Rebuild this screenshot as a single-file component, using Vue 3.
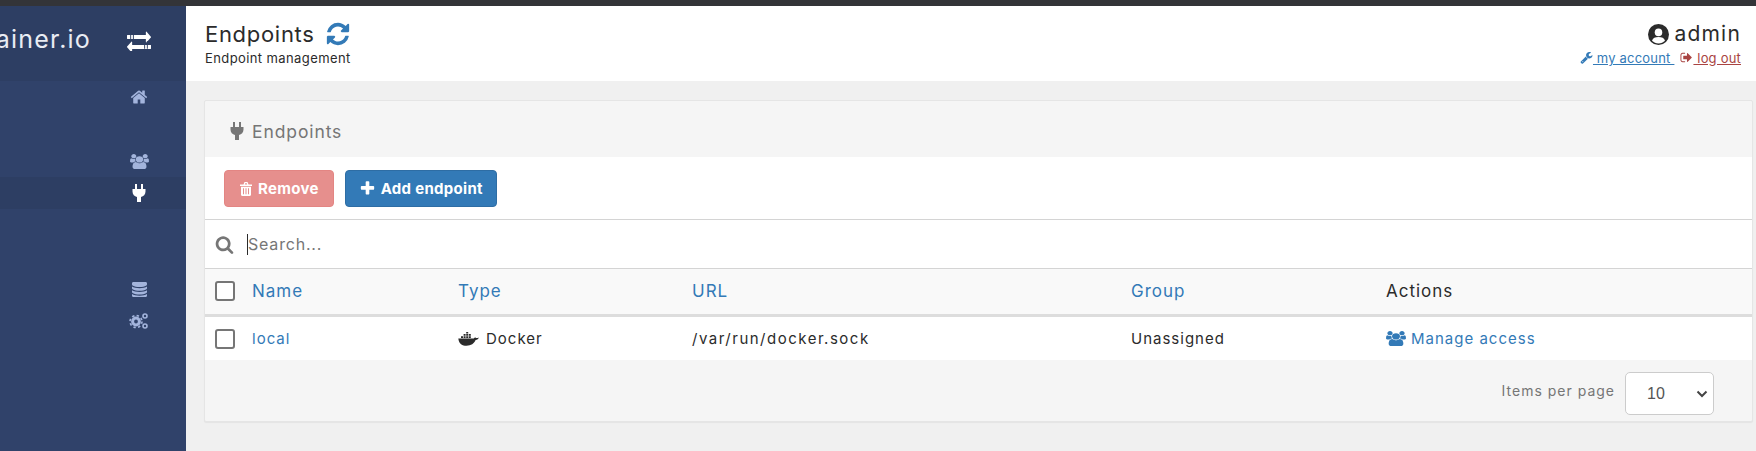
<script setup>
const paths = {
  exchange: 'M1792 1184v192q0 13-9.5 22.5t-22.5 9.5h-1376v192q0 13-9.5 22.5t-22.5 9.5q-12 0-24-10l-319-320q-9-9-9-22 0-14 9-23l320-320q9-9 23-9 13 0 22.5 9.5t9.5 22.5v192h1376q13 0 22.5 9.5t9.5 22.5zm0-544q0 14-9 23l-320 320q-9 9-23 9-13 0-22.5-9.5t-9.5-22.5v-192h-1376q-13 0-22.5-9.5t-9.5-22.5v-192q0-13 9.5-22.5t22.5-9.5h1376v-192q0-14 9-23t23-9q12 0 24 10l319 319q9 9 9 23z',
  home: 'M1472 992v480q0 26-19 45t-45 19h-384v-384h-256v384h-384q-26 0-45-19t-19-45v-480q0-1 .5-3t.5-3l575-474 575 474q1 2 1 6zm223-69l-62 74q-8 9-21 11h-3q-13 0-21-7l-692-577-692 577q-12 8-24 7-13-2-21-11l-62-74q-8-10-7-23.5t11-21.5l719-599q32-26 76-26t76 26l244 204v-195q0-14 9-23t23-9h192q14 0 23 9t9 23v408l219 182q10 8 11 21.5t-7 23.5z',
  users: 'M593 896q-162 5-265 128h-134q-82 0-138-40.5t-56-118.5q0-353 124-353 6 0 43.5 21t97.5 42.5 119 21.5q67 0 133-23-5 37-5 66 0 139 81 256zm1071 637q0 120-73 189.5t-194 69.5h-874q-121 0-194-69.5t-73-189.5q0-53 3.5-103.5t14-109 26.5-108.5 43-97.5 62-81 85.5-53.5 111.5-20q10 0 43 21.5t73 48 107 48 135 21.5 135-21.5 107-48 73-48 43-21.5q61 0 111.5 20t85.5 53.5 62 81 43 97.5 26.5 108.5 14 109 3.5 103.5zm-1024-1277q0 106-75 181t-181 75-181-75-75-181 75-181 181-75 181 75 75 181zm704 384q0 159-112.5 271.5t-271.5 112.5-271.5-112.5-112.5-271.5 112.5-271.5 271.5-112.5 271.5 112.5 112.5 271.5zm576 225q0 78-56 118.5t-138 40.5h-134q-103-123-265-128 81-117 81-256 0-29-5-66 66 23 133 23 59 0 119-21.5t97.5-42.5 43.5-21q124 0 124 353zm-128-609q0 106-75 181t-181 75-181-75-75-181 75-181 181-75 181 75 75 181z',
  plug: 'M3 0h2v5H3zM9 0h2v5H9zM.5 5h13v2.500c0 3-2 5-4.500 5.500V18H5v-5C2.500 12.500.5 10.500.5 7.500z',
  database: 'M896 768q237 0 443-43t325-127v170q0 69-103 128t-280 93.5-385 34.5-385-34.5-280-93.5-103-128v-170q119 84 325 127t443 43zm0 768q237 0 443-43t325-127v170q0 69-103 128t-280 93.5-385 34.5-385-34.5-280-93.5-103-128v-170q119 84 325 127t443 43zm0-384q237 0 443-43t325-127v170q0 69-103 128t-280 93.5-385 34.5-385-34.5-280-93.5-103-128v-170q119 84 325 127t443 43zm0-1152q208 0 385 34.5t280 93.5 103 128v128q0 69-103 128t-280 93.5-385 34.5-385-34.5-280-93.5-103-128v-128q0-69 103-128t280-93.5 385-34.5z',
  refresh: 'M1639 1056q0 5-1 7-64 268-268 434.5t-478 166.5q-146 0-282.5-55t-243.5-157l-129 129q-19 19-45 19t-45-19-19-45v-448q0-26 19-45t45-19h448q26 0 45 19t19 45-19 45l-137 137q71 66 161 102t187 36q134 0 250-65t186-179q11-17 53-117 8-23 30-23h192q13 0 22.5 9.5t9.5 22.5zm25-800v448q0 26-19 45t-45 19h-448q-26 0-45-19t-19-45 19-45l138-138q-148-137-349-137-134 0-250 65t-186 179q-11 17-53 117-8 23-30 23h-199q-13 0-22.5-9.5t-9.5-22.5v-7q65-268 270-434.5t480-166.5q146 0 284 55.5t245 156.5l130-129q19-19 45-19t45 19 19 45z',
  trash: 'M1 3.500h12v1.500H1zM4.500 3.500 5.500 1h3l1 2.500h-1.300L7.800 2.300H6.200l-.4 1.200zM2 5.800h10v8c0 .7-.5 1.200-1.200 1.200H3.200C2.500 15 2 14.500 2 13.800zM4 7.300v6h1v-6zM6.500 7.300v6h1v-6zM9 7.300v6h1v-6z',
  plus: 'M1600 736v192q0 40-28 68t-68 28h-416v416q0 40-28 68t-68 28h-192q-40 0-68-28t-28-68v-416h-416q-40 0-68-28t-28-68v-192q0-40 28-68t68-28h416v-416q0-40 28-68t68-28h192q40 0 68 28t28 68v416h416q40 0 68 28t28 68z',
  search: 'M1216 832q0-185-131.5-316.5t-316.5-131.5-316.5 131.5-131.5 316.5 131.5 316.5 316.5 131.5 316.5-131.5 131.5-316.5zm512 832q0 52-38 90t-90 38q-54 0-90-38l-343-342q-179 124-399 124-143 0-273.5-55.5t-225-150-150-225-55.5-273.5 55.5-273.5 150-225 225-150 273.5-55.5 273.5 55.5 225 150 150 225 55.5 273.5q0 220-124 399l343 343q37 37 37 90z',
  wrench: 'M448 1472q0-26-19-45t-45-19-45 19-19 45 19 45 45 19 45-19 19-45zm644-420l-682 682q-37 37-90 37-52 0-91-37l-106-108q-38-36-38-90 0-53 38-91l681-681q39 98 114.5 173.5t173.5 114.5zm634-435q0 39-23 106-47 134-164.5 217.5t-258.5 83.5q-185 0-316.5-131.5t-131.5-316.5 131.5-316.5 316.5-131.5q58 0 121.5 16.5t107.5 46.5q16 11 16 28t-16 28l-293 169v224l193 107q5-3 79-48.5t135.5-81 70.5-35.5q15 0 23.5 10t8.5 25z',
  signout: 'M704 1440q0 4 1 20t.5 26.5-3 23.5-10 19.5-20.5 6.5h-320q-119 0-203.5-84.5t-84.5-203.5v-704q0-119 84.5-203.5t203.5-84.5h320q13 0 22.5 9.5t9.5 22.5q0 4 1 20t.5 26.5-3 23.5-10 19.5-20.5 6.5h-320q-66 0-113 47t-47 113v704q0 66 47 113t113 47h312l11.5 1 11.5 3 8 5.5 7 9 2 13.5zm928-544q0 26-19 45l-544 544q-19 19-45 19t-45-19-19-45v-288h-448q-26 0-45-19t-19-45v-384q0-26 19-45t45-19h448v-288q0-26 19-45t45-19 45 19l544 544q19 19 19 45z',
}
const cols = ['Type', 'URL', 'Group']
</script>

<template>
  <div class="page">
    <div class="topbar"></div>
    <div class="shell">
      <aside class="sidebar">
        <div class="brand">
          <span class="brand-text">portainer.io</span>
          <svg class="i brand-icon" viewBox="0 250 1792 1292" preserveAspectRatio="none">
            <path fill="#fff" :d="paths.exchange" />
            <path fill="#2d3e63" d="M240 400h70v500h-70zM440 400h70v500h-70zM1282 900h70v500h-70zM1482 900h70v500h-70z" />
          </svg>
        </div>
        <nav class="nav">
          <div class="nav-row"><svg class="i s18" viewBox="0 0 1792 1792"><path :d="paths.home" /></svg></div>
          <div class="nav-row"></div>
          <div class="nav-row"><svg class="i users" viewBox="0 0 1920 1792" preserveAspectRatio="none"><path :d="paths.users" /></svg></div>
          <div class="nav-row active"><svg class="i nav-plug" viewBox="0 0 14 18"><path :d="paths.plug" /></svg></div>
          <div class="nav-row"></div>
          <div class="nav-row"></div>
          <div class="nav-row"><svg class="i s16" viewBox="128 128 1536 1536" preserveAspectRatio="none"><path :d="paths.database" /></svg></div>
          <div class="nav-row">
            <svg class="i s20" viewBox="0 0 20 20">
              <circle cx="7" cy="10.500" r="3.400" fill="none" stroke="#a3b4dc" stroke-width="3" />
              <circle cx="7" cy="10.500" r="6" fill="none" stroke="#a3b4dc" stroke-width="1.600" stroke-dasharray="2.400 2.300" />
              <circle cx="16" cy="5" r="2" fill="none" stroke="#a3b4dc" stroke-width="1.600" />
              <circle cx="16" cy="15" r="2" fill="none" stroke="#a3b4dc" stroke-width="1.600" />
            </svg>
          </div>
        </nav>
      </aside>
      <main class="main">
        <header class="header">
          <div class="title-col">
            <div class="title">Endpoints <svg class="i refresh" viewBox="0 0 1792 1792"><path fill="#337ab7" :d="paths.refresh" /></svg></div>
            <div class="subtitle">Endpoint management</div>
          </div>
          <div class="user-col">
            <div class="user">
              <svg class="i user-icon" viewBox="0 0 20 20">
                <circle cx="10" cy="10" r="10" fill="#2b2b2b" />
                <circle cx="10" cy="8" r="3.600" fill="#fff" />
                <path fill="#fff" d="M3.800 16c.8-2.600 3-3.600 6.200-3.600s5.400 1 6.200 3.600c-1.600 1.600-3.800 2.500-6.200 2.500S5.400 17.600 3.800 16z" />
              </svg>
              <span>admin</span>
            </div>
            <div class="user-links">
              <a class="ulink blue"><svg class="i s13" viewBox="0 0 1792 1792"><path fill="currentColor" :d="paths.wrench" /></svg> my account&nbsp;</a>
              <a class="ulink red"><svg class="i s13" viewBox="0 0 1792 1792"><path fill="currentColor" :d="paths.signout" /></svg> log out</a>
            </div>
          </div>
        </header>
        <section class="content">
          <div class="card">
            <div class="card-head">
              <svg class="i head-plug" viewBox="0 0 14 18"><path fill="#767676" :d="paths.plug" /></svg>
              <span>Endpoints</span>
            </div>
            <div class="toolbar">
              <button class="btn danger"><svg class="i trash-icon" viewBox="0 0 14 16"><path fill="#fff" fill-rule="evenodd" :d="paths.trash" /></svg>Remove</button>
              <button class="btn primary"><svg class="i s17" viewBox="0 0 1792 1792"><path fill="#fff" :d="paths.plus" /></svg>Add endpoint</button>
            </div>
            <div class="searchbar">
              <svg class="i search-icon" viewBox="0 0 1792 1792"><path fill="#767676" :d="paths.search" /></svg>
              <span class="caret"></span>
              <span class="placeholder">Search...</span>
            </div>
            <div class="grid-row thead">
              <div class="check-cell"><span class="box"></span></div>
              <div class="hlink">Name</div>
              <div v-for="c in cols" :key="c" class="hlink">{{ c }}</div>
              <div>Actions</div>
            </div>
            <div class="grid-row tbody">
              <div class="check-cell"><span class="box"></span></div>
              <div class="link">local</div>
              <div class="docker">
                <svg class="whale" viewBox="0 0 21 14">
                  <path fill="#2b2b2b" d="M.3 6.500h15.400c.6-.7 1.100-1.200 1.600-1.300.3.700.9 1 2.200.8l1.300-.4c-.3 1.400-1.500 2.300-3.200 2.500C16.300 11.600 13 13.800 8.500 13.800c-4 0-7.700-1.900-8.200-7.300z" />
                  <path fill="#2b2b2b" d="M3 4.300h2v1.700H3zM5.600 4.300h2v1.700h-2zM8.200 4.300h2v1.700h-2zM10.800 4.300h2v1.700h-2zM5.600 2h2v1.700h-2zM8.200 2h2v1.700h-2zM10.800 2h2v1.700h-2zM8.200 0h2v1.500h-2z" />
                </svg>
                <span>Docker</span>
              </div>
              <div class="url">/var/run/docker.sock</div>
              <div>Unassigned</div>
              <div class="link manage-cell"><svg class="i manage" viewBox="0 0 1920 1792" preserveAspectRatio="none"><path fill="#337ab7" :d="paths.users" /></svg> Manage access</div>
            </div>
            <div class="card-foot">
              <span class="per-page">Items per page</span>
              <div class="select">
                <span>10</span>
                <svg class="chev" viewBox="0 0 12 8"><path d="M1.500 1.500 6 6l4.500-4.500" fill="none" stroke="#444" stroke-width="2" /></svg>
              </div>
            </div>
          </div>
        </section>
      </main>
    </div>
  </div>
</template>

<style>
html, body { margin: 0; padding: 0; background: #f0f0f0; overflow: hidden; }
</style>

<style scoped>
.page {
  width: 1756px;
  height: 451px;
  overflow: hidden;
  display: flex;
  flex-direction: column;
  font-family: Inter, "Open Sans", sans-serif;
  color: #2b2b2b;
  background: #f0f0f0;
}
.topbar { height: 6px; background: #333438; flex: none; }
.shell { flex: 1; display: flex; min-height: 0; }
.i { display: inline-block; flex: none; }
.sidebar { width: 186px; flex: none; background: #30426a; display: flex; flex-direction: column; }
.brand {
  height: 75px;
  background: #2d3e63;
  display: flex;
  align-items: center;
  justify-content: flex-end;
  overflow: hidden;
  padding-right: 35px;
  gap: 36px;
}
.brand-text { color: #e9ecf3; font-size: 25px; letter-spacing: 1.200px; white-space: nowrap; margin-top: -9px; }
.brand-icon { width: 24px; height: 20px; margin-top: -6px; }
.nav { display: flex; flex-direction: column; }
.nav-row {
  height: 32px;
  display: grid;
  grid-template-columns: 20px;
  justify-content: end;
  justify-items: center;
  align-items: center;
  padding-right: 37px;
  fill: #a3b4dc;
}
.s16 { width: 15px; height: 15px; }
.s18 { width: 18px; height: 18px; }
.s20 { width: 20px; height: 20px; }
.s13 { width: 13px; height: 13px; vertical-align: -1px; }
.s17 { width: 17px; height: 17px; }
.trash-icon { width: 14px; height: 16px; }
.users { width: 19px; height: 15px; }
.nav-plug { width: 14px; height: 18px; }
.nav-row.active { background: #2d3e63; fill: #fff; }
.main { flex: 1; min-width: 0; display: flex; flex-direction: column; }
.header {
  height: 75px;
  flex: none;
  background: #fff;
  display: flex;
  justify-content: space-between;
  padding: 15px 15px 0 19px;
  box-sizing: border-box;
}
.title { font-size: 22px; line-height: 26px; color: #2b2b2b; letter-spacing: 0.700px; display: flex; align-items: center; gap: 6px; }
.refresh { width: 26px; height: 26px; margin-left: 4px; }
.subtitle { font-size: 13px; line-height: 18px; margin-top: 2px; color: #2b2b2b; letter-spacing: 0.400px; }
.user-col { display: flex; flex-direction: column; align-items: flex-end; }
.user { font-size: 21px; line-height: 26px; letter-spacing: 1.200px; display: flex; align-items: center; gap: 5px; }
.user-icon { width: 21px; height: 21px; }
.user-links { font-size: 13px; line-height: 18px; margin-top: 2px; display: flex; gap: 6px; letter-spacing: 0.200px; }
.ulink { text-decoration: underline; white-space: nowrap; }
.blue { color: #337ab7; }
.red { color: #a94442; }
.content { padding: 19px 3px 0 18px; }
.card {
  background: #f5f5f5;
  border: 1px solid #e5e5e5;
  border-radius: 2px;
  box-shadow: 0 1px 1px rgba(0, 0, 0, 0.05);
  height: 322px;
  box-sizing: border-box;
  overflow: hidden;
}
.card-head {
  height: 56px;
  display: flex;
  align-items: center;
  padding: 4px 0 0 25px;
  box-sizing: border-box;
  gap: 8px;
  font-size: 17.500px;
  letter-spacing: 0.900px;
  color: #767676;
}
.head-plug { width: 14px; height: 18px; }
.toolbar {
  height: 63px;
  background: #fff;
  box-sizing: border-box;
  border-bottom: 1px solid #d4d4d4;
  display: flex;
  align-items: flex-start;
  padding: 13px 0 0 19px;
  gap: 11px;
}
.btn {
  height: 37px;
  box-sizing: border-box;
  border-radius: 4px;
  border: 1px solid;
  color: #fff;
  font: 700 15px Inter, sans-serif;
  letter-spacing: 0.300px;
  display: flex;
  align-items: center;
  gap: 5px;
  padding: 0 14px;
}
.danger { background: #e68f8d; border-color: #e38583; }
.primary { background: #337ab7; border-color: #2e6da4; padding: 0 13px; }
.searchbar {
  height: 49px;
  background: #fff;
  box-sizing: border-box;
  border-bottom: 1px solid #d4d4d4;
  display: flex;
  align-items: center;
  padding-left: 10px;
  position: relative;
}
.search-icon { width: 19px; height: 19px; margin-right: 13px; }
.caret { width: 1px; height: 21px; background: #2b2b2b; }
.placeholder { color: #767676; font-size: 16px; letter-spacing: 0.800px; }
.grid-row {
  display: grid;
  grid-template-columns: 47px 206px 234px 439px 255px 1fr;
  align-items: center;
  font-size: 15px;
  letter-spacing: 1px;
}
.check-cell { padding-left: 10px; display: flex; }
.box { width: 20px; height: 20px; box-sizing: border-box; border: 2px solid #767676; border-radius: 3px; background: #fff; }
.thead {
  height: 48px;
  box-sizing: border-box;
  background: #f9f9f9;
  border-bottom: 3px solid #ddd;
  font-size: 17px;
  padding-bottom: 1px;
}
.hlink, .link { color: #337ab7; }
.tbody { height: 43px; background: #fff; }
.url { letter-spacing: 1.500px; }
.docker { display: flex; align-items: center; gap: 7px; }
.whale { width: 21px; height: 14px; }
.manage-cell { display: flex; align-items: center; gap: 5px; }
.manage { width: 20px; height: 15px; }
.card-foot {
  height: 59px;
  display: flex;
  align-items: flex-start;
  justify-content: flex-end;
  padding: 12px 38px 0 0;
  box-sizing: border-box;
  gap: 10px;
}
.per-page { font-size: 14px; color: #767676; letter-spacing: 1px; line-height: 38px; }
.select {
  width: 89px;
  height: 43px;
  box-sizing: border-box;
  background: #fff;
  border: 1px solid #ccc;
  border-radius: 5px;
  display: flex;
  align-items: center;
  justify-content: space-between;
  padding: 0 5px 0 21px;
  font-size: 16px;
  font-family: "Liberation Sans", sans-serif;
  color: #555;
}
.chev { width: 12px; height: 8px; }
</style>
